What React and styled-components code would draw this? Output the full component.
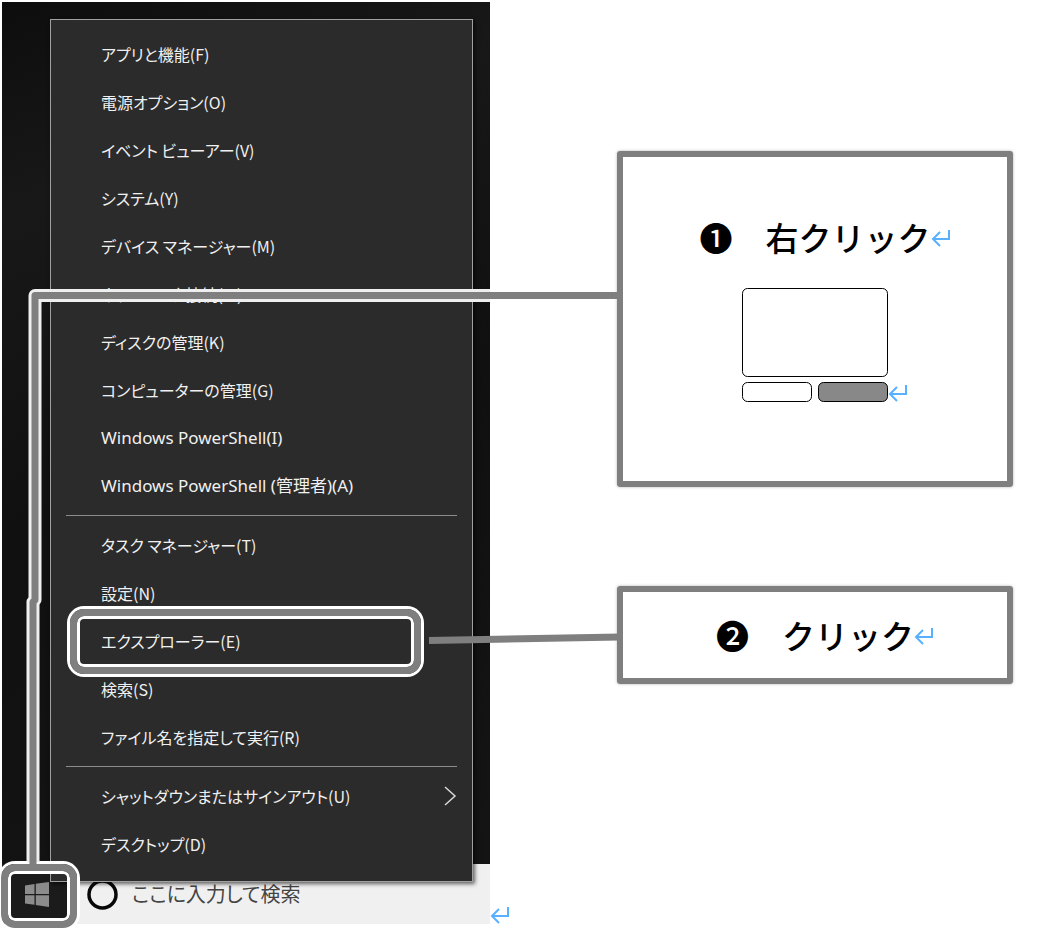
import React from 'react';
import styled, { createGlobalStyle, css } from 'styled-components';

const GREY = '#7f7f7f';
const BLUE = '#58b0ff';

const GlobalStyle = createGlobalStyle`
  * { box-sizing: border-box; }
  body {
    margin: 0;
    background: #fff;
    font-family: "Noto Sans CJK JP", "Noto Sans", sans-serif;
  }
  button, input { font: inherit; }
`;

const Page = styled.main`
  position: relative;
  display: grid;
  grid-template-columns: 490px minmax(0, 1fr);
  align-items: start;
  padding-bottom: 4px;
`;

const Desktop = styled.section`
  position: relative;
  padding: 2px 0 0 2px;
`;

const Wallpaper = styled.div`
  padding: 17px 17px 0 48px;
  background: linear-gradient(160deg, #0d0d0d, #181818 20%, #101010 50%, #141414);
`;

const Menu = styled.ul`
  position: relative;
  z-index: 1;
  margin: 0 0 -18px;
  padding: 10px 15px 13px;
  list-style: none;
  background: #2b2b2b;
  border: 1px solid #a0a0a0;
  box-shadow: 2px 2px 4px rgba(0, 0, 0, 0.6);
`;

const Item = styled.li`
  position: relative;
  display: flex;
`;

const ItemButton = styled.button`
  flex: 1;
  display: flex;
  align-items: center;
  justify-content: space-between;
  height: 48px;
  padding: 0 0 0 35px;
  border: 0;
  background: none;
  color: #f0f0f0;
  font-size: 16px;
  line-height: 24px;
  text-align: left;
  white-space: nowrap;
  font-feature-settings: "palt";
  ${(p) => p.$latin && css`
    font-family: "Noto Sans", "Noto Sans CJK JP", sans-serif;
    font-size: 17px;
  `}
`;

const Divider = styled.li`
  height: 1px;
  margin: 5px 0;
  background: #8c8c8c;
`;

const ring = css`
  position: absolute;
  border: 7px solid ${GREY};
  box-shadow: 0 0 0 3px #fff, inset 0 0 0 3px #fff;
  pointer-events: none;
`;

const ItemRing = styled.span`
  ${ring}
  inset: -8px 36px -9px 4px;
  border-radius: 14px;
`;

const StartRing = styled.span`
  ${ring}
  z-index: 2;
  inset: 0 auto -4px -1px;
  width: 76px;
  border-radius: 14px;
`;

const Taskbar = styled.div`
  position: relative;
  display: flex;
  align-items: center;
  height: 60px;
  background: #f0f0f0;
`;

const StartButton = styled.button`
  display: grid;
  place-items: center;
  align-self: stretch;
  width: 70px;
  padding: 0;
  border: 0;
  background: #1b1b1b;
`;

const SearchLabel = styled.label`
  display: flex;
  align-items: center;
  gap: 14px;
  flex: 1;
  padding-left: 15px;
`;

const SearchInput = styled.input`
  flex: 1;
  min-width: 0;
  padding: 0;
  border: 0;
  outline: 0;
  background: none;
  color: #444;
  font-size: 20px;
  line-height: 28px;
  font-feature-settings: "palt";
  &::placeholder { color: #444; opacity: 1; }
`;

const Connectors = styled.svg`
  position: absolute;
  z-index: 3;
  top: 0;
  left: 0;
  pointer-events: none;
`;

const Notes = styled.section`
  display: flex;
  flex-direction: column;
  gap: 99px;
  padding: 151px 31px 0 127px;
`;

const Callout = styled.article`
  display: flex;
  flex-direction: column;
  align-items: center;
  gap: 27px;
  padding: ${(p) => (p.$tall ? '56px 0 79px' : '19px 0')};
  border: 6px solid ${GREY};
  border-radius: 3px;
  box-shadow: 0 0 3px rgba(0, 0, 0, 0.3);
`;

const Step = styled.h2`
  position: relative;
  margin: 0;
  color: #000;
  font-size: 33px;
  font-weight: 500;
  line-height: 48px;
  white-space: pre;
`;

const Pad = styled.div`
  position: relative;
  display: flex;
`;

const MarkSlot = styled.span`
  position: absolute;
  left: 100%;
  bottom: ${(p) => p.$bottom};
  display: flex;
`;

function ReturnMark() {
  return (
    <svg width="19" height="18" viewBox="0 0 19 18" fill="none" stroke={BLUE} strokeWidth="2" aria-hidden="true">
      <path d="M18 1v9H2M9 3 2 10 9 17" />
    </svg>
  );
}

function WindowsLogo() {
  return (
    <svg width="24" height="25" viewBox="0 0 24 25" fill="#8c8c8c" aria-hidden="true">
      <path d="M0 3.5 9.5 2v10H0zM10.8 1.8 24 0v12H10.8zM0 13.3h9.5v9.5L0 21.4zM10.8 13.3H24V25l-13.2-2z" />
    </svg>
  );
}

const groups = [
  [
    'アプリと機能(F)',
    '電源オプション(O)',
    'イベント ビューアー(V)',
    'システム(Y)',
    'デバイス マネージャー(M)',
    'ネットワーク接続(W)',
    'ディスクの管理(K)',
    'コンピューターの管理(G)',
    'Windows PowerShell(I)',
    'Windows PowerShell (管理者)(A)',
  ],
  ['タスク マネージャー(T)', '設定(N)', 'エクスプローラー(E)', '検索(S)', 'ファイル名を指定して実行(R)'],
  ['シャットダウンまたはサインアウト(U)', 'デスクトップ(D)'],
];

export default function App() {
  return (
    <>
      <GlobalStyle />
      <Page>
        <Desktop>
          <Wallpaper>
            <Menu>
              {groups.map((items, g) => (
                <React.Fragment key={g}>
                  {g > 0 && <Divider role="separator" />}
                  {items.map((label) => (
                    <Item key={label}>
                      <ItemButton type="button" $latin={label.startsWith('Windows')}>
                        {label}
                        {label.endsWith('(U)') && (
                          <svg width="13" height="22" viewBox="0 0 13 22" fill="none" stroke="#d8d8d8" strokeWidth="1.5" aria-hidden="true">
                            <path d="m1 2 10 9L1 20" />
                          </svg>
                        )}
                      </ItemButton>
                      {label.endsWith('(E)') && <ItemRing />}
                    </Item>
                  ))}
                </React.Fragment>
              ))}
            </Menu>
          </Wallpaper>
          <Taskbar>
            <StartButton type="button" aria-label="スタート">
              <WindowsLogo />
            </StartButton>
            <SearchLabel>
              <svg width="31" height="31" viewBox="0 0 31 31" fill="none" stroke="#080808" strokeWidth="3.5" aria-hidden="true">
                <circle cx="15.500" cy="15.500" r="13.500" />
              </svg>
              <SearchInput type="text" aria-label="検索" placeholder="ここに入力して検索" />
            </SearchLabel>
            <StartRing />
            <MarkSlot $bottom="0">
              <ReturnMark />
            </MarkSlot>
          </Taskbar>
        </Desktop>

        <Notes>
          <Callout $tall>
            <Step>
              {'❶　右クリック'}
              <MarkSlot $bottom="14px"><ReturnMark /></MarkSlot>
            </Step>
            <Pad>
              <svg width="146" height="114" viewBox="0 0 146 114" fill="#fff" stroke="#000" aria-hidden="true">
                <rect x=".5" y=".5" width="145" height="88" rx="5" />
                <rect x=".5" y="94.500" width="69" height="19" rx="5" />
                <rect x="76.500" y="94.500" width="69" height="19" rx="5" fill="#888" />
              </svg>
              <MarkSlot $bottom="0"><ReturnMark /></MarkSlot>
            </Pad>
          </Callout>
          <Callout>
            <Step>
              {'❷　クリック'}
              <MarkSlot $bottom="14px"><ReturnMark /></MarkSlot>
            </Step>
          </Callout>
        </Notes>

        <Connectors width="620" height="864" viewBox="0 0 620 864" fill="none" aria-hidden="true">
          <path d="M490 295.500H35V600L33 602V862" stroke="#efefef" strokeWidth="13" strokeLinejoin="round" />
          <path d="M620 295.500H35V600L33 602V864" stroke={GREY} strokeWidth="7" strokeLinejoin="round" />
          <path d="M429 640.500 620 637" stroke={GREY} strokeWidth="7" />
        </Connectors>
      </Page>
    </>
  );
}
